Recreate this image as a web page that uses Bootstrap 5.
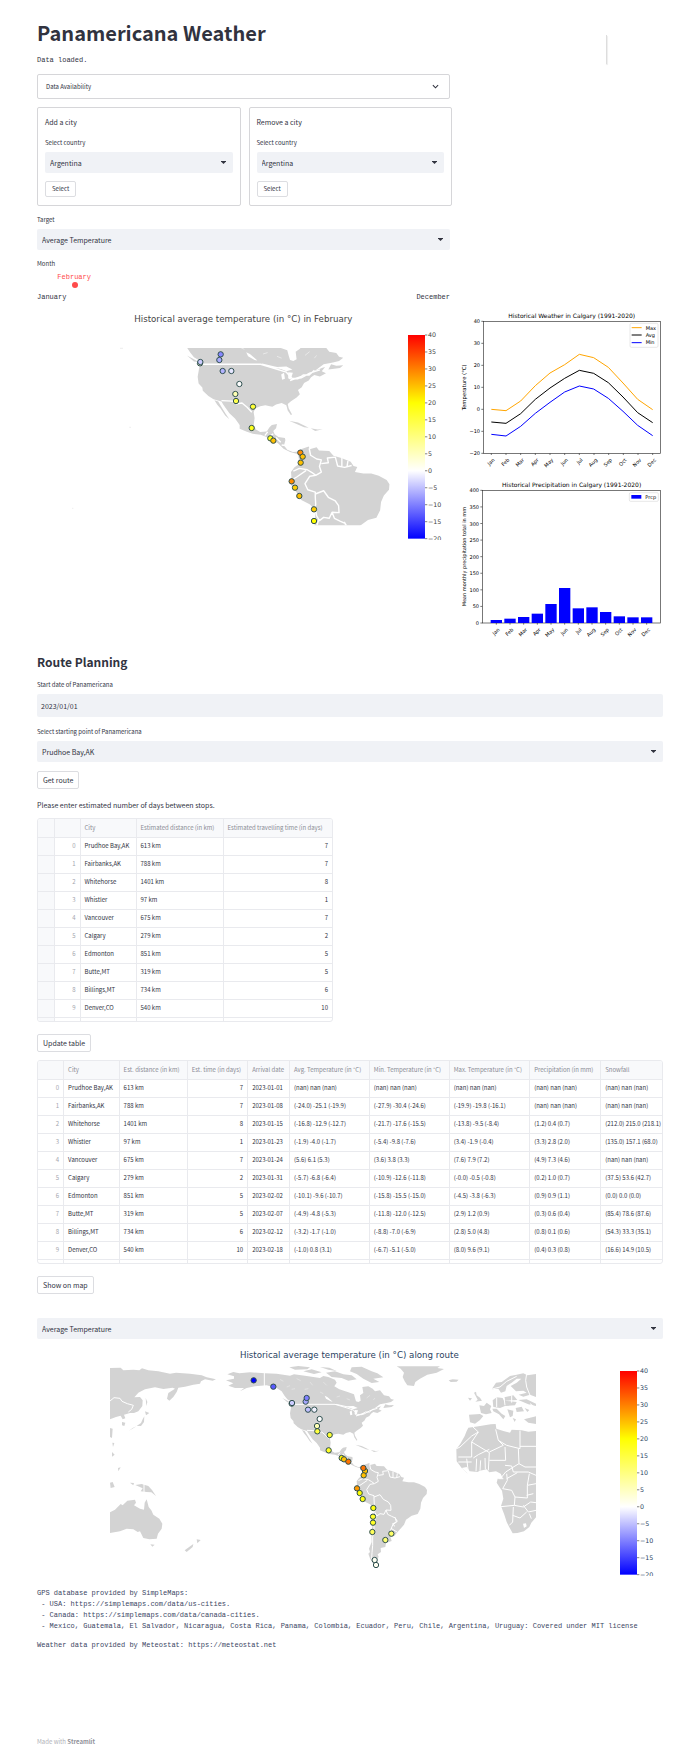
<!DOCTYPE html>
<html lang="en">
<head>
<meta charset="utf-8">
<meta name="viewport" content="width=device-width, initial-scale=1">
<title>Panamericana Weather</title>
<link href="https://cdn.jsdelivr.net/npm/bootstrap@5.3.0/dist/css/bootstrap.min.css" rel="stylesheet">
<style>
:root{--ink:#31333f;--soft:#f0f2f6;--line:#e9eaee;--edge:#d6d6d9}
body{font-family:"Noto Sans CJK SC","Source Sans Pro",sans-serif;font-size:7px;line-height:14px;color:var(--ink);background:#fff}
.page{padding:20px 26px 5px 37px}
.split{display:grid;grid-template-columns:413fr 203fr;column-gap:10px}
.stack{display:flex;flex-direction:column;gap:8px}
.roomy{gap:9px}
h1{font-size:20px;line-height:26px;font-weight:700;margin:0}
h2{font-size:12px;line-height:20px;font-weight:600;margin:13px 0 7px}
.mono{font-family:"Liberation Mono",monospace;font-size:7px;line-height:12px;margin:0}
.fold{height:25px;border:1px solid var(--edge);border-radius:2px;background:#fff;color:var(--ink);font-size:6px;line-height:12px;padding:0 10px 0 8px}
.fold svg{width:7px;height:7px}
.forms{display:grid;grid-template-columns:1fr 1fr;gap:8px;margin-right:-2px}
.box{border:1px solid var(--edge);border-radius:2px;padding:7px 7px 8px}
.form-label{display:block;font-size:6px;line-height:12px;margin:0 0 3px}
.form-select,.form-control{height:21px;border:0;border-radius:2px;background-color:var(--soft);color:var(--ink);font-size:7px;line-height:14px;padding:0 16px 0 5px}
.form-select{background-image:url("data:image/svg+xml,%3Csvg xmlns='http://www.w3.org/2000/svg' viewBox='0 0 10 6'%3E%3Cpath d='M0 0h10v1L5 6 0 1z' fill='%2331333f'/%3E%3C/svg%3E");background-size:5px 3px;background-position:right 7px center}
.form-control{height:23px;padding-left:4px}
.btn-st{border:1px solid #dcdde1;border-radius:2px;background:#fff;color:var(--ink);font-size:7px;line-height:16px;padding:0 5px;align-self:flex-start}
.btn-sm-st{font-size:6px;line-height:14px;padding:0 6px}
.slide{position:relative;padding-bottom:2px}
.slide output{position:absolute;left:9%;top:14px;transform:translateX(-50%);color:#ff4b4b;line-height:10px}
.slide .form-range{display:block;width:calc(100% + 6px);height:6px;margin:12px -3px 3px}
.form-range::-webkit-slider-runnable-track{background:transparent;height:6px}
.form-range::-webkit-slider-thumb{width:6px;height:6px;margin:0;background:#ff4b4b;box-shadow:none}
svg.plot{display:block;width:100%;height:auto}
svg text{font-family:"DejaVu Sans",sans-serif}
.charts{padding-top:5px;display:flex;flex-direction:column;gap:7px}
.land{fill:#d3d3d3}.cut{fill:none;stroke:#fff;stroke-width:3;stroke-linejoin:round}.sea{fill:#fff}
.grid-box{border:1px solid var(--line);border-radius:3px;overflow:hidden;height:204px}
.grid-box table{width:100%;table-layout:fixed;border-collapse:collapse;font-size:6px;line-height:12px;margin:0}
.grid-box th,.grid-box td{height:18px;padding:0 4px;white-space:nowrap;overflow:hidden;border-right:1px solid var(--line);border-bottom:1px solid var(--line);font-weight:400}
.grid-box tr>:last-child{border-right:0}
.grid-box thead th{background:#f8f9fb;color:#8a8c95}
.grid-box tbody th{color:#a3a5ad;text-align:right}
.grid-box .pick{background:#f8f9fb}
.route-size{max-width:296px;margin-top:6px}
.update{display:block;margin:12px 0 8px}
.show-map{display:block;margin:12px 0 24px}
.notes .mono{line-height:11px;color:#3b4663;white-space:pre-wrap}
.notes a{color:inherit;text-decoration:none}
.made{color:#b0b1b7;font-size:6px;line-height:12px;margin-top:85px}
.made a{color:#8f9098;font-weight:600;text-decoration:none}
.blip{width:2px;height:29px;margin:15px 0 0 145px;border-right:1px solid #ddd;box-shadow:1px 1px 1px #eee}
</style>
</head>
<body>
<main class="page">
<div class="split">
  <div class="stack">
    <h1>Panamericana Weather</h1>
    <p class="mono">Data loaded.</p>
    <button class="fold d-flex align-items-center justify-content-between w-100" type="button"><span>Data Availability</span>
      <svg viewBox="0 0 8 8" aria-hidden="true"><path d="M1 2.500 4 5.500 7 2.500" fill="none" stroke="#31333f" stroke-width="1.200"/></svg></button>
    <div class="forms">
      <form class="box stack">
        <div>Add a city</div>
        <div><label class="form-label" for="addc">Select country</label><select class="form-select" id="addc"><option>Argentina</option></select></div>
        <button class="btn-st btn-sm-st" type="button">Select</button>
      </form>
      <form class="box stack">
        <div>Remove a city</div>
        <div><label class="form-label" for="remc">Select country</label><select class="form-select" id="remc"><option>Argentina</option></select></div>
        <button class="btn-st btn-sm-st" type="button">Select</button>
      </form>
    </div>
    <div><label class="form-label" for="target">Target</label><select class="form-select" id="target"><option>Average Temperature</option></select></div>
    <div class="slide"><label class="form-label" for="month">Month</label><output class="mono" for="month">February</output>
      <input class="form-range" type="range" id="month" min="0" max="11" value="1">
      <div class="mono d-flex justify-content-between"><span>January</span><span>December</span></div></div>
  </div>
  <div><div class="blip"></div></div>
</div>

<div class="split">
  <svg class="plot" viewBox="111 15 1239 704" role="img" aria-label="Temperature map for February">
    <defs><clipPath id="frame"><rect x="111" y="144" width="1070" height="532"/></clipPath>
    <linearGradient id="heat" x1="0" y1="0" x2="0" y2="1"><stop offset="0" stop-color="#f00"/><stop offset=".3333" stop-color="#ff0"/><stop offset=".6667" stop-color="#fff"/><stop offset="1" stop-color="#00f"/></linearGradient>
    <g id="americas">
      <path class="land" d="M412 127 430 120 448 124 480 121 525 124 560 125 600 131 612 127 650 132 690 138 700 132 715 135 735 143 740 152 733 163 748 172 775 181 792 187 795 198 798 208 805 210 812 206 810 190 820 183 817 165 835 163 848 170 855 178 870 175 882 190 897 193 903 201 912 203 903 210 890 213 870 217 862 223 850 232 866 225 873 223 866 232 875 236 862 243 850 240 843 245 838 252 828 257 823 266 815 272 819 281 812 288 800 296 793 302 795 311 802 324 800 326 793 316 790 305 780 300 768 303 760 308 745 305 734 307 723 312 720 320 722 332 720 348 725 357 734 362 748 361 754 352 759 347 770 345 768 354 762 360 765 367 773 373 787 375 788 380 785 391 792 400 804 405 820 404 812 409 798 405 784 398 772 386 758 379 745 372 735 368 718 366 704 361 690 355 690 347 680 333 668 322 655 304 651 297 634 292 623 285 611 274 610 267 602 258 600 244 603 226 605 217 612 215 600 207 592 202 584 192 575 178 560 168 530 160 495 163 470 168 450 178 462 168 435 168 415 161 430 154 408 145 432 140 432 133Z"/>
      <path class="land" d="M636 294 644 297 652 310 660 323 668 335 659 327 649 312 642 304ZM880 228 886 217 897 220 912 219 905 225ZM577 198 590 205 602 212 592 211ZM796 338 815 342 838 353 828 352 812 345ZM842 354 857 357 868 356 852 360ZM598 106 625 102 660 106 652 112 615 113ZM640 118 665 112 695 121 672 126ZM690 105 718 107 740 117 715 113ZM708 122 735 118 760 127 785 130 800 142 775 146 755 138 725 135ZM785 106 815 104 845 118 862 124 880 136 850 140 868 150 845 153 820 140 800 126 780 118Z"/>
      <path class="sea" d="M770 223 790 222 803 228 790 232ZM785 235 787 248 781 250 779 239ZM794 234 804 235 799 250 794 247ZM704 191 712 195 728 209 722 208 708 200Z"/>
      <path class="cut" d="M523 122V163L545 167 555 176M610 217H735L765 226 790 234 802 247 815 248 826 240 839 240 850 230M738 217 765 223 790 228M798 252 822 243M800 250 822 246 840 236 862 229M651 295 675 296 684 302 695 300 706 309 716 320M744 370 750 362M755 371 762 366M768 374 778 384M780 390 788 391"/>
      <path d="M590 165 600 161M570 142 580 148M605 172 615 170M620 140 632 146M660 150 668 160M644 172 655 170M690 180 700 185M700 150 710 160M740 195 750 192M770 200 780 204M840 190 830 198M855 198 850 204" stroke="#e9e9e9" stroke-width="2"/>
      <g transform="translate(690 0)">
        <path class="land" d="M126 414 131 399 148 393 150 399 165 395 170 402 192 403 201 413 218 418 238 426 244 435 252 437 247 448 265 451 282 451 298 456 315 465 321 474 320 486 309 498 303 512 301 530 293 546 275 551 258 563 252 578 240 592 230 603 223 612 211 614 215 627 198 633 196 645 182 648 183 660 173 667 176 675 166 687 172 704 162 698 151 682 145 665 150 660 147 650 155 630 154 600 160 565 163 530 150 517 132 508 122 492 109 474 106 467 111 460 110 448 117 438 128 430Z"/>
        <path class="cut" d="M149 397 152 412 165 420 175 422 171 436 175 448 163 455 155 449 145 443 128 440 115 446M163 455 150 457 140 473 146 486 162 491 162 501 163 518 159 530M112 465 123 458 142 445M175 430 190 428 188 418 205 416 210 435 225 438 240 434M219 418 219 436M232 424 230 437M162 495 180 488 190 502 205 510 212 520 213 535 198 534 192 547 180 545 171 552 165 542 163 530M198 534 203 547 215 553 226 558 229 570 217 576 225 583M224 555 232 568 218 579 212 594 212 608M213 589 231 600M169 552 162 572 162 596 158 615 158 640 156 662 155 680 165 692"/>
      </g>
    </g></defs>
    <text x="730" y="67" font-size="26" fill="#444" text-anchor="middle">Historical average temperature (in °C) in February</text>
    <g clip-path="url(#frame)"><use href="#americas" transform="matrix(1.4 0 0 1.4 -247 -111)"/></g>
    <path d="M360 145h9M388 382h5M216 625h4" stroke="#e4e4e4" stroke-width="2"/>
    <g id="dots1"></g>
    <rect x="1224" y="105" width="51" height="611" fill="url(#heat)"/>
    <g class="scale" data-x="1275" data-y="105" data-h="611" fill="#444"></g>
  </svg>
  <div class="charts">
    <svg class="plot" id="lines" viewBox="27 30 609 483" role="img" aria-label="Historical weather in Calgary">
      <text x="362" y="54" font-size="18" text-anchor="middle">Historical Weather in Calgary (1991-2020)</text>
      <text transform="translate(46 262) rotate(-90)" font-size="16" text-anchor="middle">Temperature (°C)</text>
      <g fill="none" stroke-width="3" stroke-linejoin="round">
        <polyline stroke="#ffa500" points="121,328 165,332 209,303 253,257 297,219 341,194 385,163 428,173 472,202 516,249 560,298 605,329"/>
        <polyline stroke="#000" points="121,366 165,370 209,341 253,298 297,264 341,235 385,211 428,220 472,248 516,291 560,338 605,368"/>
        <polyline stroke="#00f" points="121,403 165,408 209,379 253,340 297,307 341,276 385,258 428,267 472,295 516,334 560,376 605,407"/>
      </g>
      <rect x="97" y="64" width="531" height="396" fill="none" stroke="#333" stroke-width="2"/>
      <rect x="537" y="70" width="84" height="72" rx="4" fill="#fff" stroke="#ddd" stroke-width="2"/>
      <path d="M542 83h30" stroke="#ffa500" stroke-width="3"/><path d="M542 105h30" stroke="#000" stroke-width="3"/><path d="M542 128h30" stroke="#00f" stroke-width="3"/>
      <g font-size="15"><text x="584" y="89">Max</text><text x="584" y="111">Avg</text><text x="584" y="133">Min</text></g>
    </svg>
    <svg class="plot" id="bars" viewBox="27 24 609 483" role="img" aria-label="Historical precipitation in Calgary">
      <text x="362" y="51" font-size="18" text-anchor="middle">Historical Precipitation in Calgary (1991-2020)</text>
      <text transform="translate(46 260) rotate(-90)" font-size="15" text-anchor="middle">Mean monthly precipitation total in mm</text>
      <rect x="94" y="61" width="534" height="398" fill="none" stroke="#333" stroke-width="2"/>
      <rect x="535" y="68" width="87" height="26" rx="4" fill="#fff" stroke="#ddd" stroke-width="2"/>
      <rect x="541" y="75" width="30" height="11" fill="#00f"/><text x="583" y="86" font-size="15">Prcp</text>
    </svg>
  </div>
</div>

<h2>Route Planning</h2>
<div class="stack roomy">
  <div><label class="form-label" for="start">Start date of Panamericana</label><input class="form-control" id="start" type="text" value="2023/01/01"></div>
  <div><label class="form-label" for="from">Select starting point of Panamericana</label><select class="form-select" id="from"><option>Prudhoe Bay,AK</option></select></div>
  <button class="btn-st" type="button">Get route</button>
  <div>Please enter estimated number of days between stops.</div>
</div>
<div class="grid-box route-size"><table>
  <colgroup><col style="width:16px"><col style="width:26px"><col style="width:56px"><col style="width:87px"><col></colgroup>
  <thead><tr><th></th><th></th><th>City</th><th>Estimated distance (in km)</th><th>Estimated travelling time (in days)</th></tr></thead><tbody id="t1"></tbody></table></div>
<button class="btn-st update" type="button">Update table</button>
<div class="grid-box"><table>
  <colgroup><col style="width:4.1%"><col style="width:8.9%"><col style="width:10.9%"><col style="width:9.7%"><col style="width:6.7%"><col style="width:12.8%"><col style="width:12.8%"><col style="width:12.9%"><col style="width:11.4%"><col></colgroup>
  <thead><tr><th></th><th>City</th><th>Est. distance (in km)</th><th>Est. time (in days)</th><th>Arrival date</th><th>Avg. Temperature (in °C)</th><th>Min. Temperature (in °C)</th><th>Max. Temperature (in °C)</th><th>Precipitation (in mm)</th><th>Snowfall</th></tr></thead><tbody id="t2"></tbody></table></div>
<button class="btn-st show-map" type="button">Show on map</button>
<select class="form-select" aria-label="Route target"><option>Average Temperature</option></select>
<svg class="plot mt-2" viewBox="-159 45 1878 687" role="img" aria-label="Temperature map along the route">
  <text x="778" y="79" font-size="26" fill="#2a3f5f" text-anchor="middle">Historical average temperature (in °C) along route</text>
  <use href="#americas"/>
  <path class="land" d="M60 108 92 107 100 115 130 113 148 115 156 109 175 115 205 118 240 125 258 122 300 125 335 130 350 136 378 142 368 146 345 142 333 148 330 155 310 158 285 164 265 167 260 180 250 195 238 206 231 200 235 183 255 170 248 167 220 171 195 166 165 172 145 182 133 196 150 195 158 205 157 222 145 238 132 243 120 243 102 248 106 259 98 262 92 251 78 255 60 262Z"/>
  <path class="land" d="M167 198 172 210 169 222ZM165 238 178 243 168 250ZM163 253 162 270 153 282 140 282 153 273 158 262ZM96 270 106 272 103 282 96 280ZM140 283 128 288 117 296ZM60 288 68 290 66 318 60 315ZM67 332 73 333 69 345ZM66 360 74 368 66 374ZM84 408 92 406 85 418ZM60 452 68 450 74 465 62 468ZM120 452 132 453 130 460ZM136 459 155 456 175 462 186 474 198 492 184 481 170 480 152 478 158 469ZM60 541 75 533 92 516 98 520 112 506 135 503 138 512 132 520 150 530 162 533 164 512 170 502 176 525 184 535 190 548 208 560 217 575 215 590 204 605 200 620 178 622 160 618 150 598 143 600 130 592 110 590 90 598 60 603ZM181 637 194 638 187 644ZM320 622 332 624 322 634ZM310 636 308 645 290 660 284 655Z"/>
  <path class="cut" d="M60 207 72 197 90 199 96 208 112 215 130 220 125 232 115 240M162 456V481"/>
  <g transform="translate(690 0)">
    <path class="land" d="M230 103H360L352 108 372 111 350 122 322 128 300 140 286 150 282 162 262 160 254 148 248 135 252 122 242 110ZM386 145 398 142 416 143 410 149 392 150ZM444 197 456 199 450 206ZM462 182 468 179 470 190 480 197 486 206 466 209 473 203ZM447 248 480 246 490 252 480 264 465 275 450 271ZM478 220 492 222 500 212 514 222 510 232 515 243 498 247 483 243ZM518 205 530 196 548 198 552 206 590 210 585 220 555 222 540 228 520 225ZM517 230 530 230 545 245 556 252 550 262 537 247 520 238ZM515 172 528 152 545 150 570 132 590 128 610 124 622 130 648 126 648 195 630 188 610 194 596 188 620 182 610 176 588 178 572 162 590 152 604 140 590 140 575 152 560 162 556 178 543 182 535 170ZM553 196 580 190 592 204 555 206ZM587 228 605 224 612 238 590 240ZM562 232 580 236 578 252 570 256ZM578 258 588 262 584 270ZM595 204 620 202 648 215 648 222 625 217ZM612 262 648 253 648 276 625 272ZM614 228 628 234 622 240Z"/>
    <path class="land" d="M445 287 466 284 485 281 512 277 527 276 529 290 550 297 570 302 575 293 605 295 625 299 648 297 648 556 634 572 628 585 612 598 592 603 578 604 568 586 560 570 553 548 543 522 550 500 546 476 538 465 530 452 533 440 548 438 542 425 528 418 508 421 500 412 480 416 472 420 450 418 442 424 425 408 410 388 409 352 421 335 434 312 440 297Z"/>
    <path class="sea" d="M425 408 442 424 452 422 440 405ZM609 575 618 574 620 583 612 588Z"/>
    <path class="cut" d="M458 284 475 300 455 312 420 345 410 350M475 300 455 330 508 362M455 330V375H415M460 378 475 368 508 352M527 292 535 325 550 340 508 360M535 325 560 340 600 350V296M600 343H648M555 345 557 385 508 385M508 362 505 415M595 350 597 395 585 402 557 420 545 435M597 395 615 405 648 405M470 380 468 418M482 385 480 416M495 378 496 412M440 380 445 420M415 390 455 390M555 400 575 402 580 420 625 420 648 430M560 425 562 445 548 470M550 440H535M560 440 592 422M548 470 575 475 585 495 622 498 622 460 648 455M628 425 622 460M585 495 583 520 543 524M583 520 610 525 632 510 648 512M580 525 578 570 568 580M578 550 600 558 620 540M610 520 625 540 648 535M620 490 640 485M628 545 634 560"/>
    <path class="cut" d="M620 125 617 145 620 165 632 195M530 196V225M552 196 555 220M575 190V212M500 175 540 165 560 148 590 133M630 215 640 222"/>
  </g>
  <g id="dots2"></g>
  <rect x="1590" y="117" width="51" height="611" fill="url(#heat)"/>
  <g class="scale" data-x="1641" data-y="117" data-h="611" fill="#2a3f5f"></g>
</svg>
<section class="notes mt-2 pt-1">
<p class="mono">GPS database provided by SimpleMaps:
 - USA: <a href="#">https://simplemaps.com/data/us-cities</a>.
 - Canada: <a href="#">https://simplemaps.com/data/canada-cities</a>.
 - Mexico, Guatemala, El Salvador, Nicaragua, Costa Rica, Panama, Colombia, Ecuador, Peru, Chile, Argentina, Uruguay: Covered under MIT license</p>
<p class="mono mt-2">Weather data provided by Meteostat: <a href="#">https://meteostat.net</a></p>
</section>
<footer class="made">Made with <a href="#">Streamlit</a></footer>
</main>
<script src="https://cdn.jsdelivr.net/npm/bootstrap@5.3.0/dist/js/bootstrap.bundle.min.js"></script>
<script>
const add = (id, html) => document.getElementById(id).insertAdjacentHTML('beforeend', html);

// Temperature to colour: -20 blue, 0 white, 20 yellow, 40 red
function heat(t){
  const b = v => Math.round(255 * Math.max(0, Math.min(1, v)));
  if (t < 0) return `rgb(${b(1 + t/20)},${b(1 + t/20)},255)`;
  if (t < 20) return `rgb(255,255,${b(1 - t/20)})`;
  return `rgb(255,${b(1 - (t - 20)/20)},0)`;
}
const dots = list => list.map(([x, y, t]) => `<circle cx="${x}" cy="${y}" r="8" fill="${heat(t)}" stroke="#2f4f4f" stroke-width="3"/>`).join('');
add('dots1', dots([[662,163,-9.5],[658,180,-6.5],[600,190,4],[601,186,-4],[668,213,-6],[694,213,-2],[718,252,0],[706,282,6],[708,303,14],[759,320,16],[755,384,18],[811,415,18],[820,422,25],[901,458,29],[908,470,25],[902,488,25],[875,544,29],[885,563,24],[898,588,25],[942,628,24],[942,663,20]]));
add('dots2', dots([[491,145,-20],[550,164,-13],[647,209,-7],[650,198,-10],[605,215,2],[606,213,-4],[654,233,-5],[673,233,-1],[689,261,0],[681,282,6],[682,298,15],[719,309,16],[716,355,17],[755,378,21],[762,382,25],[775,389,31],[825,417,25],[820,408,31],[821,430,25],[801,469,28],[809,483,20],[818,501,19],[850,528,19],[849,554,17],[849,572,17],[847,600,13],[904,605,12],[886,624,11],[854,684,1],[858,699,1]]));
document.querySelectorAll('.scale').forEach(g => {
  const x = +g.dataset.x, y = +g.dataset.y, h = +g.dataset.h;
  let s = '';
  for (let v = 40; v >= -20; v -= 5){
    const p = y + (40 - v) / 60 * h;
    s += `<path d="M${x} ${p}h7" stroke="#444" stroke-width="2"/><text x="${x + 9}" y="${p + 7}" font-size="19">${v < 0 ? '−' + -v : v}</text>`;
  }
  g.innerHTML = s;
});
const months = ['Jan','Feb','Mar','Apr','May','Jun','Jul','Aug','Sep','Oct','Nov','Dec'];
const tick = (x, y, m) => `<path d="M${x} ${y}v5" stroke="#333" stroke-width="2"/><text transform="translate(${x + 11} ${y + 21}) rotate(-45)" font-size="15" text-anchor="end">${m}</text>`;
const level = (x, y, v) => `<path d="M${x} ${y}h-6" stroke="#333" stroke-width="2"/><text x="${x - 10}" y="${y + 6}" font-size="15" text-anchor="end">${v}</text>`;
months.forEach((m, i) => add('lines', tick(121 + i * 44, 460, m)));
for (let v = -20; v <= 40; v += 10) add('lines', level(97, 460 - (v + 20) * 6.6, v < 0 ? '−' + -v : v));
[9,13,18,28,57,105,44,47,33,20,17,17].forEach((v, i) => {
  const x = 136 + i * 41;
  add('bars', `<rect x="${x - 17}" y="${459 - v}" width="34" height="${v}" fill="#00f"/>` + tick(x, 459, months[i]));
});
for (let v = 0; v <= 400; v += 50) add('bars', level(94, 459 - v * .995, v));

const rows = `Prudhoe Bay,AK|613|7|2023-01-01|(nan) nan (nan)|(nan) nan (nan)|(nan) nan (nan)|(nan) nan (nan)|(nan) nan (nan)
Fairbanks,AK|788|7|2023-01-08|(-24.0) -25.1 (-19.9)|(-27.9) -30.4 (-24.6)|(-19.9) -19.8 (-16.1)|(nan) nan (nan)|(nan) nan (nan)
Whitehorse|1401|8|2023-01-15|(-16.8) -12.9 (-12.7)|(-21.7) -17.6 (-15.5)|(-13.8) -9.5 (-8.4)|(1.2) 0.4 (0.7)|(212.0) 215.0 (218.1)
Whistler|97|1|2023-01-23|(-1.9) -4.0 (-1.7)|(-5.4) -9.8 (-7.6)|(3.4) -1.9 (-0.4)|(3.3) 2.8 (2.0)|(135.0) 157.1 (68.0)
Vancouver|675|7|2023-01-24|(5.6) 6.1 (5.3)|(3.6) 3.8 (3.3)|(7.6) 7.9 (7.2)|(4.9) 7.3 (4.6)|(nan) nan (nan)
Calgary|279|2|2023-01-31|(-5.7) -6.8 (-6.4)|(-10.9) -12.6 (-11.8)|(-0.0) -0.5 (-0.8)|(0.2) 1.0 (0.7)|(37.5) 53.6 (42.7)
Edmonton|851|5|2023-02-02|(-10.1) -9.6 (-10.7)|(-15.8) -15.5 (-15.0)|(-4.5) -3.8 (-6.3)|(0.9) 0.9 (1.1)|(0.0) 0.0 (0.0)
Butte,MT|319|5|2023-02-07|(-4.9) -4.8 (-5.3)|(-11.8) -12.0 (-12.5)|(2.9) 1.2 (0.9)|(0.3) 0.6 (0.4)|(85.4) 78.6 (87.6)
Billings,MT|734|6|2023-02-12|(-3.2) -1.7 (-1.0)|(-8.8) -7.0 (-6.9)|(2.8) 5.0 (4.8)|(0.8) 0.1 (0.6)|(54.3) 33.3 (35.1)
Denver,CO|540|10|2023-02-18|(-1.0) 0.8 (3.1)|(-6.7) -5.1 (-5.0)|(8.0) 9.6 (9.1)|(0.4) 0.3 (0.8)|(16.6) 14.9 (10.5)`.split('\n').map(r => r.split('|'));
rows.forEach((r, i) => {
  const start = `<th scope="row">${i}</th><td>${r[0]}</td><td>${r[1]} km</td><td class="text-end">${r[2]}</td>`;
  add('t1', `<tr><td class="pick"></td>${start}</tr>`);
  add('t2', `<tr>${start}${r.slice(3).map(c => `<td>${c}</td>`).join('')}</tr>`);
});
add('t1', '<tr><td class="pick"></td>' + '<td></td>'.repeat(4) + '</tr>');
add('t2', '<tr>' + '<td></td>'.repeat(10) + '</tr>');
</script>
</body>
</html>
